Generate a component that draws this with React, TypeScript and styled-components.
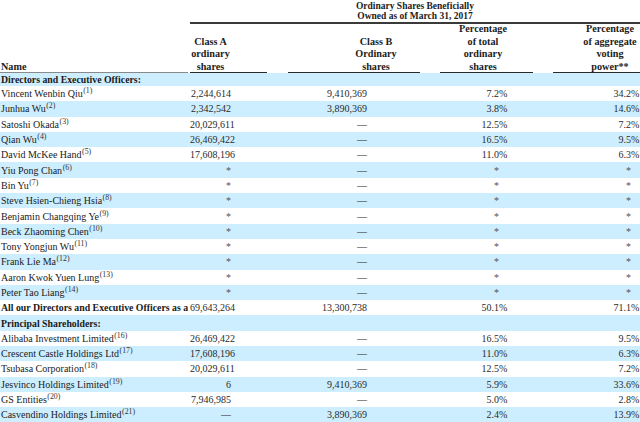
import React from 'react';
import styled, { createGlobalStyle } from 'styled-components';

const GlobalStyle = createGlobalStyle`
  html, body {
    margin: 0;
    padding: 0;
    background: #ffffff;
  }
  body {
    font-family: "Liberation Serif", "Times New Roman", serif;
    color: #1c1c1c;
    overflow: hidden;
  }
`;

const Page = styled.div`
  width: 640px;
  height: 422px;
  overflow: hidden;
  font-size: 10px;
`;

const TitleBlock = styled.div`
  display: grid;
  grid-template-columns: 190px 1fr;
  height: 24px;
`;

const Title = styled.div`
  grid-column: 2;
  font-weight: bold;
  font-size: 9.5px;
  line-height: 10.5px;
  text-align: center;
  padding-top: 0.5px;
  border-bottom: 2px solid #3a3a3a;
`;

const HeadRow = styled.div`
  display: flex;
  height: 49px;
  align-items: flex-end;
`;

type HeadCellProps = { $left: number; $width: number; $pl?: number; $pr?: number; $align?: string; $light?: boolean };

const HeadCell = styled.div<HeadCellProps>`
  margin-left: ${p => p.$left}px;
  width: ${p => p.$width}px;
  box-sizing: border-box;
  padding-left: ${p => p.$pl || 0}px;
  padding-right: ${p => p.$pr || 0}px;
  text-align: ${p => p.$align || 'center'};
  font-weight: bold;
  font-size: 10.2px;
  line-height: 12.4px;
  white-space: nowrap;
  border-bottom: 1px solid ${p => (p.$light ? '#8a8a8a' : '#2a2a2a')};
`;

const HeadText = styled.div<{ $indent?: boolean }>`
  margin-bottom: -1px;
  padding-left: ${p => (p.$indent ? 1 : 0)}px;
`;

type RowProps = { $shade: boolean; $height: number };

const Row = styled.div<RowProps>`
  display: grid;
  grid-template-columns: 190px 41px 69px 67px 132px 9px 123px 9px;
  height: ${p => p.$height}px;
  align-items: center;
  background: ${p => (p.$shade ? '#cdeefe' : '#ffffff')};
`;

const NameCell = styled.div<{ $bold?: boolean }>`
  padding-left: 1px;
  white-space: nowrap;
  font-weight: ${p => (p.$bold ? 'bold' : 'normal')};
  font-size: ${p => (p.$bold ? '9.8px' : '10px')};
  color: #1a1a1a;
`;

const Note = styled.sup`
  font-size: 7.8px;
  line-height: 0;
  vertical-align: 4px;
  margin-left: 0.5px;
  color: #333;
`;

const Num = styled.div<{ $col: number }>`
  grid-column: ${p => p.$col};
  text-align: right;
  white-space: nowrap;
  color: #2a2a2a;
`;

const Pct = styled.div<{ $col: number }>`
  grid-column: ${p => p.$col};
  text-align: left;
  color: #2a2a2a;
`;

const Star = styled.span`
  color: #555;
`;

type Holder = {
  name: string;
  note?: number;
  a?: string;
  b?: string;
  p1?: string;
  p2?: string;
  kind?: 'section' | 'total';
};

const star = '*';
const dash = '—';

const starRow = (name: string, note: number): Holder => ({ name, note, a: star, b: dash, p1: star, p2: star });

const holders: Holder[] = [
  { name: 'Directors and Executive Officers:', kind: 'section' },
  { name: 'Vincent Wenbin Qiu', note: 1, a: '2,244,614', b: '9,410,369', p1: '7.2', p2: '34.2' },
  { name: 'Junhua Wu', note: 2, a: '2,342,542', b: '3,890,369', p1: '3.8', p2: '14.6' },
  { name: 'Satoshi Okada', note: 3, a: '20,029,611', b: dash, p1: '12.5', p2: '7.2' },
  { name: 'Qian Wu', note: 4, a: '26,469,422', b: dash, p1: '16.5', p2: '9.5' },
  { name: 'David McKee Hand', note: 5, a: '17,608,196', b: dash, p1: '11.0', p2: '6.3' },
  starRow('Yiu Pong Chan', 6),
  starRow('Bin Yu', 7),
  starRow('Steve Hsien-Chieng Hsia', 8),
  starRow('Benjamin Changqing Ye', 9),
  starRow('Beck Zhaoming Chen', 10),
  starRow('Tony Yongjun Wu', 11),
  starRow('Frank Lie Ma', 12),
  starRow('Aaron Kwok Yuen Lung', 13),
  starRow('Peter Tao Liang', 14),
  { name: 'All our Directors and Executive Officers as a', kind: 'total', a: '69,643,264', b: '13,300,738', p1: '50.1', p2: '71.1' },
  { name: 'Principal Shareholders:', kind: 'section' },
  { name: 'Alibaba Investment Limited', note: 16, a: '26,469,422', b: dash, p1: '16.5', p2: '9.5' },
  { name: 'Crescent Castle Holdings Ltd', note: 17, a: '17,608,196', b: dash, p1: '11.0', p2: '6.3' },
  { name: 'Tsubasa Corporation', note: 18, a: '20,029,611', b: dash, p1: '12.5', p2: '7.2' },
  { name: 'Jesvinco Holdings Limited', note: 19, a: '6', b: '9,410,369', p1: '5.9', p2: '33.6' },
  { name: 'GS Entities', note: 20, a: '7,946,985', b: dash, p1: '5.0', p2: '2.8' },
  { name: 'Casvendino Holdings Limited', note: 21, a: dash, b: '3,890,369', p1: '2.4', p2: '13.9' },
];

const cellValue = (v?: string) => (v === star ? <Star>*</Star> : v);

const PctPair = ({ value, col }: { value?: string; col: number }) => {
  if (!value) return null;
  if (value === star) {
    return <Num $col={col}><Star>*</Star></Num>;
  }
  return (
    <>
      <Num $col={col}>{value}</Num>
      <Pct $col={col + 1}>%</Pct>
    </>
  );
};

export default function App() {
  return (
    <Page>
      <GlobalStyle />
      <TitleBlock>
        <Title>
          Ordinary Shares Beneficially
          <br />
          Owned as of March 31, 2017
        </Title>
      </TitleBlock>
      <HeadRow>
        <HeadCell $left={0} $width={188} $align="left" $light>
          <HeadText $indent>Name</HeadText>
        </HeadCell>
        <HeadCell $left={2} $width={77} $pr={36}>
          <HeadText>
            Class A
            <br />
            ordinary
            <br />
            shares
          </HeadText>
        </HeadCell>
        <HeadCell $left={21} $width={132} $pl={44}>
          <HeadText>
            Class B
            <br />
            Ordinary
            <br />
            shares
          </HeadText>
        </HeadCell>
        <HeadCell $left={20} $width={93} $pr={7}>
          <HeadText>
            Percentage
            <br />
            of total
            <br />
            ordinary
            <br />
            shares
          </HeadText>
        </HeadCell>
        <HeadCell $left={20} $width={87} $pl={27}>
          <HeadText>
            Percentage
            <br />
            of aggregate
            <br />
            voting
            <br />
            power**
          </HeadText>
        </HeadCell>
      </HeadRow>
      {holders.map((h, i) => (
        <Row key={h.name} $shade={i % 2 === 0} $height={i === 0 ? 13 : 15.3}>
          <NameCell $bold={h.kind !== undefined}>
            {h.name}
            {h.note !== undefined && <Note>({h.note})</Note>}
          </NameCell>
          {h.a && <Num $col={2}>{cellValue(h.a)}</Num>}
          {h.b && <Num $col={4}>{cellValue(h.b)}</Num>}
          <PctPair value={h.p1} col={5} />
          <PctPair value={h.p2} col={7} />
        </Row>
      ))}
    </Page>
  );
}
